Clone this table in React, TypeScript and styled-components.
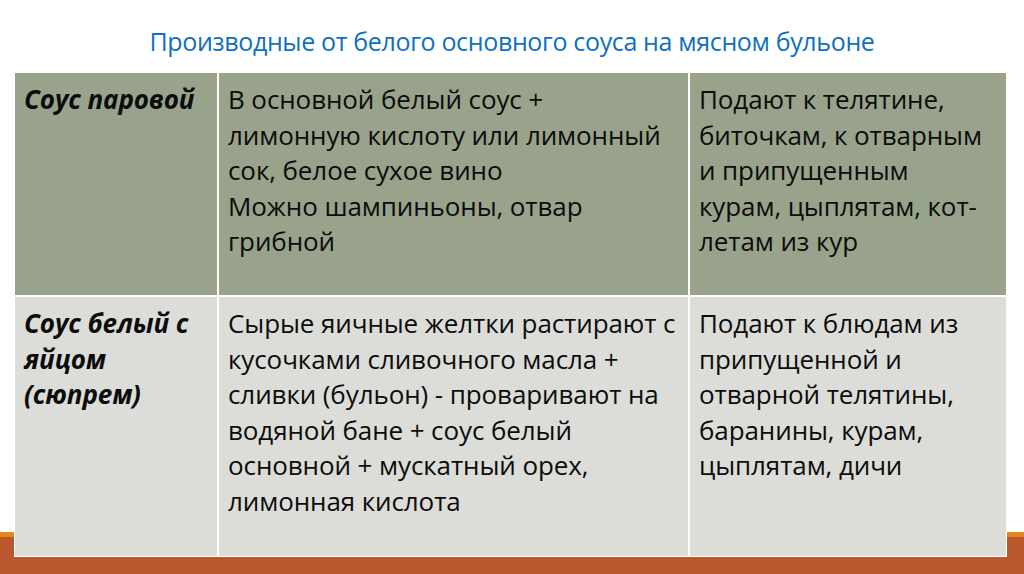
import React from 'react'
import styled, { createGlobalStyle } from 'styled-components'

const GlobalStyle = createGlobalStyle`
  html, body {
    margin: 0;
    padding: 0;
    background: #ffffff;
  }
  body {
    font-family: "Open Sans", "Noto Sans", sans-serif;
  }
`

type Row = {
  name: string[]
  recipe: string[]
  serve: string[]
  tone: 'dark' | 'light'
}

const rows: Row[] = [
  {
    name: ['Соус паровой'],
    recipe: [
      'В основной белый соус +',
      'лимонную кислоту или лимонный',
      'сок, белое сухое вино',
      'Можно шампиньоны, отвар',
      'грибной',
    ],
    serve: [
      'Подают к телятине,',
      'биточкам, к отварным',
      'и припущенным',
      'курам, цыплятам, кот-',
      'летам из кур',
    ],
    tone: 'dark',
  },
  {
    name: ['Соус белый с', 'яйцом', '(сюпрем)'],
    recipe: [
      'Сырые яичные желтки растирают с',
      'кусочками сливочного масла +',
      'сливки (бульон) - проваривают на',
      'водяной бане + соус белый',
      'основной + мускатный орех,',
      'лимонная кислота',
    ],
    serve: [
      'Подают к блюдам из',
      'припущенной и',
      'отварной телятины,',
      'баранины, курам,',
      'цыплятам, дичи',
    ],
    tone: 'light',
  },
]

const Slide = styled.div`
  width: 1024px;
  height: 574px;
  display: flex;
  flex-direction: column;
  overflow: hidden;
  background: linear-gradient(
    to bottom,
    #ffffff 0,
    #ffffff 532px,
    #e2861f 532px,
    #e2861f 537px,
    #b9582c 537px,
    #b9582c 574px
  );
`

const Title = styled.h1`
  margin: 0;
  height: 72px;
  display: flex;
  align-items: center;
  justify-content: center;
  padding-top: 10px;
  box-sizing: border-box;
  font-size: 25px;
  font-weight: 400;
  letter-spacing: -0.35px;
  color: #0f6fc1;
`

const Table = styled.div`
  margin-left: 14px;
  width: 993px;
  box-sizing: border-box;
  display: grid;
  grid-template-columns: 202px 469px 316px;
  grid-template-rows: 222px 259px;
  gap: 2px;
  border: 1px solid #ffffff;
  background: #ffffff;
`

const Cell = styled.div<{ $tone: 'dark' | 'light' }>`
  padding: 9px 9px;
  background: ${(p) => (p.$tone === 'dark' ? '#99a38b' : '#dcddd8')};
  color: #0c0c0c;
  font-size: 26px;
  line-height: 35.6px;
  letter-spacing: -0.1px;
  white-space: nowrap;
`

const NameCell = styled(Cell)`
  font-weight: 700;
  font-style: italic;
`

const Lines = ({ lines }: { lines: string[] }) => (
  <>
    {lines.map((l, i) => (
      <div key={i}>{l}</div>
    ))}
  </>
)

export default function App() {
  return (
    <>
      <GlobalStyle />
      <Slide>
        <Title>Производные от белого основного соуса на мясном бульоне</Title>
        <Table>
          {rows.map((r, idx) => (
            <React.Fragment key={idx}>
              <NameCell $tone={r.tone}>
                <Lines lines={r.name} />
              </NameCell>
              <Cell $tone={r.tone}>
                <Lines lines={r.recipe} />
              </Cell>
              <Cell $tone={r.tone}>
                <Lines lines={r.serve} />
              </Cell>
            </React.Fragment>
          ))}
        </Table>
      </Slide>
    </>
  )
}
